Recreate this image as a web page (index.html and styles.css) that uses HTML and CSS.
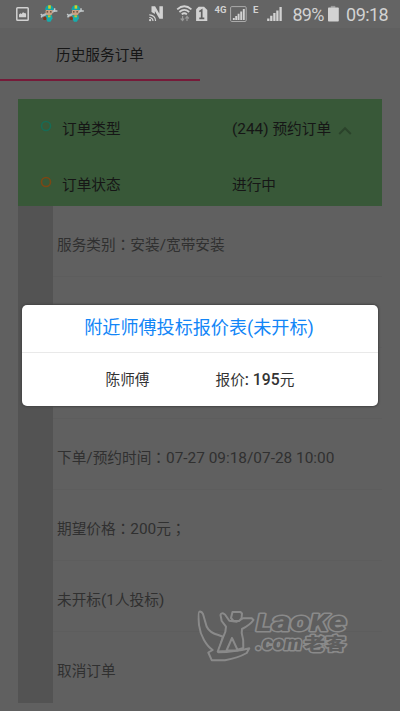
FILE: index.html
```html
<!DOCTYPE html>
<html lang="zh-CN">
<head>
<meta charset="utf-8">
<title>历史服务订单</title>
<link rel="stylesheet" href="styles.css">
</head>
<body>
<div class="screen">
  <header class="status">
    <svg width="400" height="28" viewBox="0 0 400 28">
      <defs>
        <g id="worker">
          <path d="M2.5 10.3l4-1.6M11.5 7l3-1.8" stroke="#b4bcc0" stroke-width="2.4" fill="none"/>
          <path d="M.8 8.8l1.5 1.6L1.2 12M14.6 3v2.6h2.8" stroke="#c4cacc" stroke-width="1.5" fill="none"/>
          <circle cx="9" cy="6.8" r="3.5" fill="#c9a083"/>
          <path d="M5 4.8Q5.2 0 9.4 0q4.3.2 4.3 4.6z" fill="#12a4a8"/>
          <path d="M8.2 0h2.6v3.4H8.2z" fill="#d6cf20"/>
          <path d="M6.6 6.6h1.5M10 6.6h1.5" stroke="#503e32" stroke-width="1.2"/>
          <path d="M6 10h6l.5 3-2 3.5H7.5L6 13.5z" fill="#17acac"/>
          <path d="M8 10h2.5v2H8z" fill="#c6c52c"/>
          <rect x="3.2" y="11.6" width="3.3" height="3.2" rx="1" fill="#813719"/>
        </g>
      </defs>
      <rect x="16.8" y="7.8" width="11.4" height="12.4" rx=".8" fill="none" stroke="#d2d2d2" stroke-width="1.5"/>
      <path d="M19 17.3v-2.8l1.5-1.3 1.2.7 1.4-2 1 1.4 1-.5 1 1.2v3.3z" fill="#d2d2d2"/>
      <use href="#worker" x="40" y="5.3"/>
      <use href="#worker" x="66.4" y="5.3"/>
      <path d="M151.5 12V6.2h3.6l4.3 7.6V6.2h3.5v12.6h-3.5l-4.5-7.7V14z" fill="#d2d2d2"/>
      <g fill="none" stroke="#d2d2d2" stroke-width="1.2">
        <path d="M149.3 14.8a6 6 0 0 1 6.3 6.2M149.3 17.5a3.5 3.5 0 0 1 3.7 3.5"/>
        <circle cx="150.1" cy="20.2" r=".5"/>
      </g>
      <path d="M177.2 9.4q7.1-6.2 14.2 0M179.4 12q4.9-4.3 9.8 0M181.7 14.4q2.6-2.2 5.2 0" fill="none" stroke="#d2d2d2" stroke-width="1.8"/>
      <path d="M182.6 16v4.5m-1.9-2l1.9 2 1.5-2M187 21v-4.6m-1.6 2.1l1.6-2 1.8 2" stroke="#999" stroke-width="1.2" fill="none"/>
      <path d="M198.6 6.8h5.5l3.2 3.2v11h-11.2V9.3z" fill="#d2d2d2"/>
      <path d="M199.3 11.6l2.4-1.6v8.3M199.3 18.3h5" fill="none" stroke="#606060" stroke-width="1.7"/>
      <text x="214.4" y="13.2" class="net" textLength="12">4G</text>
      <rect x="230.6" y="6.6" width="15.6" height="14.9" rx="1.2" fill="none" stroke="#aaa" stroke-width="1"/>
      <path d="M233.8 20v-2M236.2 20v-4M238.6 20v-6.2M241.2 20v-8.5M243.8 20V9" stroke="#d2d2d2" stroke-width="1.9"/>
      <text x="253" y="13.2" class="net">E</text>
      <path d="M268.3 21v-2.5M271.3 21v-5.3M274.4 21v-8M277.4 21v-10.5M280.6 21V7" stroke="#d2d2d2" stroke-width="2.3"/>
      <text x="292.4" y="20.8" class="clock" textLength="32">89%</text>
      <path d="M330.8 5.9h4.5v2h-4.5z" fill="#999"/>
      <rect x="328" y="7.6" width="10.8" height="14" rx=".8" fill="#d2d2d2"/>
      <text x="346.1" y="20.8" class="clock" textLength="42.6">09:18</text>
    </svg>
  </header>
  <nav class="tabs"><div class="tab active">历史服务订单</div><div class="tab"></div></nav>
  <main class="order">
    <section class="summary">
      <div class="line">
        <svg class="ring" width="12" height="12" viewBox="0 0 12 12"><circle cx="6" cy="6" r="4.5"/></svg>
        <span class="label">订单类型</span><span><span class="num">(244) </span>预约订单</span>
        <svg class="chevron" width="14" height="10" viewBox="0 0 14 10"><path d="M1.2 8L7 2.2 12.8 8"/></svg>
      </div>
      <div class="line">
        <svg class="ring orange" width="12" height="12" viewBox="0 0 12 12"><circle cx="6" cy="6" r="4.5"/></svg>
        <span class="label">订单状态</span><span>进行中</span>
      </div>
    </section>
    <ul class="details">
      <li>服务类别<span class="punct" lang="zh-TW">：</span>安装<span class="num">/</span>宽带安装</li>
      <li></li>
      <li></li>
      <li>下单<span class="num">/</span>预约时间<span class="punct" lang="zh-TW">：</span><span class="num">07-27 09:18/07-28 10:00</span></li>
      <li>期望价格<span class="punct" lang="zh-TW">：</span><span class="num">200</span>元<span class="punct" lang="zh-TW">；</span></li>
      <li class="low">未开标<span class="num">(1</span>人投标<span class="num">)</span></li>
      <li class="low">取消订单</li>
    </ul>
  </main>
  <section class="dialog">
    <h1>附近师傅投标报价表(未开标)</h1>
    <div class="bid"><span class="name">陈师傅</span><span>报价<strong>: 195</strong>元</span></div>
  </section>
  <svg class="watermark" width="160" height="60" viewBox="0 0 160 60">
    <g fill="#5e5e5e" stroke="#8a8a8a" stroke-width="2" stroke-linejoin="round">
      <path d="M4.3 6.8Q3 7 4 20 5 28 9 35 13 42 17.7 45L13.3 47.5 16.7 55.2H30Q43 53 51.7 48L54.3 43.3Q40 47 23.3 47.3L28 31.7 23.3 30Q15 28 11.7 21.7L8 9Q6.5 6 4.3 6.8z"/>
      <path fill-rule="evenodd" d="M30 9.5Q26 7 25.5 10L26.7 16 31 21.7Q31 27 28.3 31.7L22.7 46.5 40 45.5 48.3 43Q49 35 46.7 28L47 24Q55 20 58.5 15L56.7 13.2H48.3L41.7 16.7 34.3 15.7zM37 33L31.5 45.5H42.8z"/>
      <path d="M37.5 7h8l1.500 1.500-.5 5-2.500 2.500h-5.500l-2.500-3z"/>
    </g>
    <g class="brand large">
      <text x="61.5" y="25.8" class="cap" textLength="15" lengthAdjust="spacingAndGlyphs">L</text>
      <text x="77" y="25.8" textLength="38" lengthAdjust="spacingAndGlyphs">ao</text>
      <text x="115" y="25.8" class="cap" textLength="18" lengthAdjust="spacingAndGlyphs">K</text>
      <text x="133.5" y="25.8" textLength="18" lengthAdjust="spacingAndGlyphs">e</text>
    </g>
    <text x="61" y="45" class="brand small" textLength="46" lengthAdjust="spacingAndGlyphs">.com</text>
    <text x="109" y="45" class="brand cjk" textLength="42" lengthAdjust="spacingAndGlyphs">老客</text>
  </svg>
</div>
</body>
</html>
```

FILE: styles.css
```css
* { box-sizing: border-box; }
body {
  margin: 0;
  font-family: Roboto, "Noto Sans CJK SC", sans-serif;
  font-size: 14.67px;
  color: #161616;
}
.screen {
  position: relative;
  width: 400px;
  height: 711px;
  overflow: hidden;
  background: #606060;
}
.status { height: 28px; background: #646464; }
.status svg { display: block; }
.clock { font-size: 18px; fill: #d2d2d2; }
.net { font-size: 9.5px; font-weight: 700; fill: #d2d2d2; }
.num { font-size: 15.4px; white-space: pre; }
.tabs { display: flex; height: 53px; }
.tab {
  width: 200px;
  line-height: 55px;
  text-align: center;
}
.tab.active { border-bottom: 2px solid #751b39; }
.order { margin: 18px 18px 0; }
.summary { height: 107px; background: #385838; }
.line {
  display: flex;
  align-items: center;
  height: 56px;
  padding: 4px 0 0 22px;
}
.line span { line-height: 20px; }
.ring {
  flex: none;
  margin: -7px 10px 0 0;
  fill: none;
  stroke: #176b55;
  stroke-width: 1.6;
}
.ring.orange { stroke: #7c4714; }
.label { width: 170px; }
.chevron { margin: 3px 0 0 7px; fill: none; stroke: #2b432b; stroke-width: 2; }
.details {
  margin: 0;
  padding: 0;
  list-style: none;
  color: #303030;
}
.details li {
  height: 71px;
  padding: 5px 0 0 4px;
  line-height: 65px;
  border-left: 35px solid #535353;
  box-shadow: inset 0 -1px #5d5d5d;
}
.details .low { padding-top: 7px; }
.details li:last-child { box-shadow: none; }
.punct { font-family: "Noto Sans CJK TC", sans-serif; }
.dialog {
  position: absolute;
  top: 305px;
  left: 22px;
  width: 356px;
  height: 101px;
  border-radius: 5px;
  background: #fff;
  box-shadow: 0 0 2px 1px #444;
}
.dialog h1 {
  height: 48px;
  margin: 0;
  padding-right: 2px;
  border-bottom: 1px solid #e9e9e9;
  font-size: 18.1px;
  font-weight: 400;
  line-height: 45px;
  text-align: center;
  color: #1386f7;
}
.bid {
  display: flex;
  height: 53px;
  padding-left: 83.5px;
  line-height: 54px;
  color: #333;
}
.name { width: 110px; }
.bid strong { font-weight: 500; font-size: 15.7px; }
.watermark { position: absolute; top: 605px; left: 195px; }
.brand {
  fill: #5e5e5e;
  stroke: #8a8a8a;
  stroke-width: 3px;
  stroke-linejoin: round;
  paint-order: stroke;
  font-weight: 900;
  font-style: italic;
}
.brand.large { font-size: 28px; }
.brand .cap { font-size: 23px; }
.brand.small { font-size: 20px; }
.brand.cjk { font-size: 17px; font-style: normal; }
```
